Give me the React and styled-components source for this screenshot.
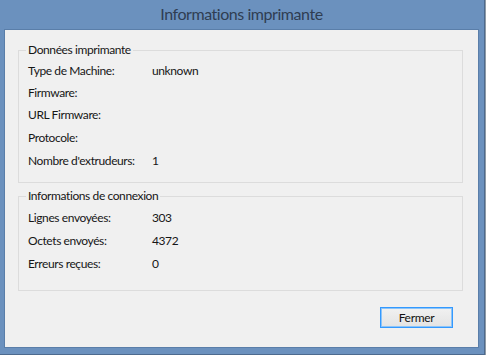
import React from 'react';
import styled, { createGlobalStyle } from 'styled-components';

const GlobalStyle = createGlobalStyle`
  html, body {
    margin: 0;
    padding: 0;
    background: #8e9aa6;
    overflow: hidden;
  }
  * {
    box-sizing: border-box;
  }
`;

const Window = styled.div`
  width: 485px;
  height: 355px;
  background: #6b91be;
  border-right: 1px solid #4d6a8e;
  border-bottom: 1px solid #4d6a8e;
  display: flex;
  flex-direction: column;
  padding: 0 5px 6px 4px;
  font-family: Lato, 'Liberation Sans', sans-serif;
`;

const TitleBar = styled.div`
  height: 29px;
  display: flex;
  align-items: center;
  justify-content: center;
  padding-bottom: 3px;
  font-size: 16px;
  color: #2f3d52;
  letter-spacing: -0.45px;
`;

const Client = styled.div`
  flex: 1;
  background: #f0f0f0;
  border: 1px solid #5a7ea9;
  display: flex;
  flex-direction: column;
  padding: 13px 15px 19px 13px;
  font-size: 12px;
  letter-spacing: -0.4px;
  color: #161616;
`;

const Group = styled.fieldset`
  margin: 0 0 ${(p) => p.$gap || 0}px 0;
  border: 1px solid #dcdcdc;
  padding: 3px 8px ${(p) => p.$bottom}px 8px;
  min-width: 0;
`;

const Legend = styled.legend`
  padding: 0 2px;
  margin-left: -1px;
  line-height: 14px;
  font-size: 12px;
`;

const Rows = styled.div`
  display: grid;
  grid-template-columns: 124px 1fr;
  padding-left: 1px;
`;

const Label = styled.div`
  height: ${(p) => p.$h}px;
  display: flex;
  align-items: center;
`;

const Value = styled(Label)``;

const Footer = styled.div`
  margin-top: auto;
  display: flex;
  justify-content: flex-end;
  padding-right: 10px;
`;

const Button = styled.button`
  width: 73px;
  height: 21px;
  font-family: inherit;
  font-size: 12px;
  letter-spacing: -0.3px;
  color: #111;
  border: 1px solid #3399ff;
  box-shadow: inset 0 0 0 1px #8cc4f8;
  background: linear-gradient(#f1f1f1, #e3e3e3);
  padding: 0;
`;

const printer = [
  ['Type de Machine:', 'unknown', 21],
  ['Firmware:', '', 22],
  ['URL Firmware:', '', 23],
  ['Protocole:', '', 23],
  ["Nombre d'extrudeurs:", '1', 23],
];

const connection = [
  ['Lignes envoyées:', '303', 23],
  ['Octets envoyés:', '4372', 23],
  ['Erreurs reçues:', '0', 23],
];

function InfoRows({ items }) {
  return (
    <Rows>
      {items.map(([label, value, h]) => (
        <React.Fragment key={label}>
          <Label $h={h}>{label}</Label>
          <Value $h={h}>{value}</Value>
        </React.Fragment>
      ))}
    </Rows>
  );
}

export default function App() {
  return (
    <>
      <GlobalStyle />
      <Window>
        <TitleBar>Informations imprimante</TitleBar>
        <Client>
          <Group $gap={6} $bottom={10}>
            <Legend>Données imprimante</Legend>
            <InfoRows items={printer} />
          </Group>
          <Group $bottom={15}>
            <Legend>Informations de connexion</Legend>
            <InfoRows items={connection} />
          </Group>
          <Footer>
            <Button>Fermer</Button>
          </Footer>
        </Client>
      </Window>
    </>
  );
}
